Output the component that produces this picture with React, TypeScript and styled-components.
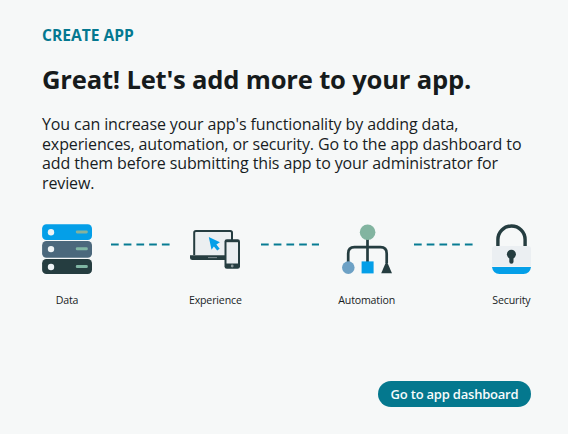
import React from "react";
import styled, { createGlobalStyle } from "styled-components";

const GlobalStyle = createGlobalStyle`
  * { box-sizing: border-box; }
  body {
    margin: 0;
    background: #f6f8f8;
    color: #181d1f;
    font-family: "Open Sans", "Noto Sans", sans-serif;
  }
`;

const Page = styled.main`
  display: flex;
  flex-direction: column;
  height: 434px;
  padding: 25px 37px 27px 42px;
  overflow: hidden;
`;

const Eyebrow = styled.div`
  font-size: 15.6px;
  line-height: 20px;
  font-weight: 700;
  color: #047890;
  white-space: nowrap;
`;

const Title = styled.h1`
  margin: 17px 0 0;
  font-size: 25.6px;
  line-height: 36px;
  font-weight: 700;
  letter-spacing: -0.2px;
  color: #161b1c;
  white-space: nowrap;
`;

const Intro = styled.p`
  margin: 17px 0 0;
  font-size: 16px;
  line-height: 19.7px;
  letter-spacing: -0.115px;
  white-space: nowrap;
`;

const Steps = styled.section`
  display: flex;
  justify-content: space-between;
  align-items: flex-start;
  margin-top: 30.2px;
`;

const Step = styled.div<{ $width: number }>`
  display: flex;
  flex-direction: column;
  align-items: center;
  width: ${(p) => p.$width}px;
  svg { display: block; flex: none; }
`;

const StepLabel = styled.span`
  margin-top: 18px;
  font-size: 10.6px;
  line-height: 16px;
  letter-spacing: -0.16px;
  white-space: nowrap;
`;

const Connector = styled.svg`
  display: block;
  flex: none;
  width: 58.6px;
  height: 3px;
  margin-top: 19px;
`;

const Footer = styled.footer`
  display: flex;
  justify-content: flex-end;
  margin-top: auto;
`;

const PrimaryButton = styled.button`
  width: 153px;
  height: 26px;
  padding: 0;
  border: 0;
  border-radius: 13px;
  background: #04788e;
  color: #f8fcfc;
  font: 600 13px/26px "Open Sans", "Noto Sans", sans-serif;
  letter-spacing: -0.21px;
  white-space: nowrap;
`;

const Dashes = () => (
  <Connector viewBox="0 0 58.6 3">
    <path d="M0 1.5h58.6" stroke="#087c93" strokeWidth="1.8" strokeDasharray="7.7 5.02" />
  </Connector>
);

const DataIcon = () => (
  <svg width="50" height="50" viewBox="0 0 50 50">
    {[
      { y: 0.3, h: 15.7, fill: "#049fe8", bar: "#86b29b" },
      { y: 17.1, h: 16.6, fill: "#4b687c", bar: "#80b6a4" },
      { y: 35, h: 15, fill: "#253d40", bar: "#80b6a4" },
    ].map((d) => (
      <g key={d.y}>
        <rect x="0.1" y={d.y} width="49.9" height={d.h} rx="4.3" fill={d.fill} />
        <circle cx="9" cy={d.y + 8} r="3.2" fill="#eef3f5" />
        <rect x="33.8" y={d.y + 6.1} width="12" height="3" rx="1.3" fill={d.bar} />
      </g>
    ))}
  </svg>
);

const ExperienceIcon = () => (
  <svg width="50" height="50" viewBox="0 0 50 50">
    <path d="M4.2 31V8.8Q4.2 7 6 7h34.2q1.8 0 1.8 1.8V31" fill="#ebeff1" stroke="#253d40" strokeWidth="2" />
    <path d="M0 31.2h36.5V36H2.5Q0 36 0 33.5z" fill="#253d40" />
    <path d="M18 33.6h9" stroke="#7c8b8e" strokeWidth="1" />
    <path d="M18.8 13l11.1 5.2-3.5 2.2 3.3 4.3-2.5 1.9-3.3-4.2-2.4 3.3z" fill="#049fe8" />
    <rect x="34.5" y="15.2" width="15.5" height="29.6" rx="2.4" fill="#253d40" />
    <rect x="36.5" y="18.2" width="11.5" height="21.3" fill="#ebeff1" />
    <circle cx="42.2" cy="42" r="1.4" fill="#8b999b" />
  </svg>
);

const AutomationIcon = () => (
  <svg width="50" height="50" viewBox="0 0 50 50">
    <path d="M25.5 14v25M6.2 38v-8.5Q6.2 23.2 12.5 23.2h26Q44.7 23.2 44.7 29.5V39" fill="none" stroke="#253d40" strokeWidth="2.7" />
    <circle cx="25.6" cy="8.2" r="7.8" fill="#82b4a0" />
    <circle cx="6.3" cy="43.6" r="6.3" fill="#6da1c5" />
    <rect x="19.6" y="37.4" width="12" height="12" fill="#049fe8" />
    <path d="M44.6 36.8L50 49.3H39.2z" fill="#253d40" />
  </svg>
);

const SecurityIcon = () => (
  <svg width="39" height="50" viewBox="0 0 39 50">
    <path d="M5.9 22V15.6a13.6 13.6 0 0 1 27.2 0V22" fill="none" stroke="#253d40" strokeWidth="3.4" />
    <path d="M0 25q0-3 3-3h33q3 0 3 3v17.6H0z" fill="#ebeff2" />
    <path d="M0 43h39Q38 49.9 31.5 49.9h-24Q1 49.9 0 43z" fill="#049fe8" />
    <circle cx="19.4" cy="30.3" r="4.5" fill="#253d40" />
    <path d="M19.4 31v6.7" stroke="#253d40" strokeWidth="4.2" strokeLinecap="round" />
  </svg>
);

const steps = [
  { label: "Data", width: 50, Icon: DataIcon },
  { label: "Experience", width: 52, Icon: ExperienceIcon },
  { label: "Automation", width: 56, Icon: AutomationIcon },
  { label: "Security", width: 39, Icon: SecurityIcon },
];

export default function App() {
  return (
    <>
      <GlobalStyle />
      <Page>
        <Eyebrow>CREATE APP</Eyebrow>
        <Title>Great! Let's add more to your app.</Title>
        <Intro>
          You can increase your app's functionality by adding data,
          <br />
          experiences, automation, or security. Go to the app dashboard to
          <br />
          add them before submitting this app to your administrator for
          <br />
          review.
        </Intro>
        <Steps>
          {steps.map(({ label, width, Icon }, i) => (
            <React.Fragment key={label}>
              {i > 0 && <Dashes />}
              <Step $width={width}>
                <Icon />
                <StepLabel>{label}</StepLabel>
              </Step>
            </React.Fragment>
          ))}
        </Steps>
        <Footer>
          <PrimaryButton>Go to app dashboard</PrimaryButton>
        </Footer>
      </Page>
    </>
  );
}
